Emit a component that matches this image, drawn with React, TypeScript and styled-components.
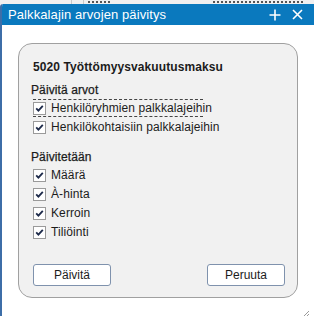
import * as React from "react";
import styled, { createGlobalStyle } from "styled-components";

const GlobalStyle = createGlobalStyle`
  html, body {
    margin: 0;
    padding: 0;
    background: #ffffff;
  }
  body {
    font-family: "Liberation Sans", Arial, sans-serif;
    width: 314px;
    height: 316px;
    overflow: hidden;
  }
`;

const Screen = styled.div`
  width: 314px;
  height: 316px;
  display: flex;
  flex-direction: column;
  overflow: hidden;
  background: #f4f4f4;
`;

// bottoms of the grid cells that lie behind the dialog
const BackStrip = styled.div`
  height: 4px;
  display: flex;
  overflow: hidden;
  background: #f0f0f0;
`;

const BackCell = styled.div<{ $w: number; $line?: boolean; $ink?: number }>`
  width: ${(p) => p.$w}px;
  flex: none;
  box-sizing: border-box;
  border-right: ${(p) => (p.$line ? "1px solid #c8c8c8" : "none")};
  background: ${(p) =>
    p.$ink
      ? `linear-gradient(#f0f0f0 0 1px, transparent 1px 3px, #f0f0f0 3px) ,
         repeating-linear-gradient(90deg, #555 0 2px, transparent 2px 4px) 4px 0 / ${p.$ink}px 100% no-repeat`
      : "transparent"};
`;

const Dialog = styled.div`
  flex: 1;
  display: flex;
  flex-direction: column;
  background: #ffffff;
  border-left: 2px solid #3d6ea8;
  border-top-left-radius: 3px;
  overflow: hidden;
`;

const TitleBar = styled.div`
  height: 21px;
  flex: none;
  display: flex;
  align-items: center;
  background: #0a79be;
  color: #ffffff;
  padding: 0 6px 0 6px;
`;

const Title = styled.div`
  flex: 1;
  font-family: "Liberation Sans", Arial, sans-serif;
  font-size: 13px;
  letter-spacing: 0.1px;
`;

const TitleButton = styled.div`
  width: 22px;
  height: 21px;
  display: flex;
  align-items: center;
  justify-content: center;
`;

const Body = styled.div`
  flex: 1;
  position: relative;
  padding: 18px 0 0 16px;
`;

const Panel = styled.div`
  width: 280px;
  height: 255px;
  box-sizing: border-box;
  border: 1px solid #a0a0a0;
  border-radius: 14px;
  background: #f1f1f1;
  padding: 16px 12px 0 14px;
  display: flex;
  flex-direction: column;
  color: #1c1c1c;
  font-size: 12px;
  letter-spacing: 0.1px;
`;

const Heading = styled.div<{ $top: number; $shift?: boolean }>`
  height: 15px;
  line-height: 15px;
  margin-top: ${(p) => p.$top}px;
  margin-left: ${(p) => (p.$shift ? -2 : 0)}px;
  font-weight: ${(p) => (p.$shift ? 400 : 700)};
  -webkit-text-stroke: ${(p) => (p.$shift ? "0.25px #1c1c1c" : "0")};
`;

const Row = styled.label<{ $focus?: boolean }>`
  height: 18px;
  display: flex;
  align-items: center;
  gap: 5px;
  margin-top: 1px;
  width: ${(p) => (p.$focus ? "170px" : "auto")};
  box-sizing: border-box;
  border-top: 1px dashed ${(p) => (p.$focus ? "#444" : "transparent")};
  border-bottom: 1px dashed ${(p) => (p.$focus ? "#444" : "transparent")};
  white-space: nowrap;
`;

const Box = styled.span`
  width: 13px;
  height: 13px;
  flex: none;
  box-sizing: border-box;
  border: 1px solid #9a9a9a;
  background: #ffffff;
  display: flex;
  align-items: center;
  justify-content: center;
`;

const Buttons = styled.div`
  margin-top: auto;
  margin-bottom: 11px;
  display: flex;
  justify-content: space-between;
`;

const Button = styled.button`
  width: 78px;
  height: 22px;
  box-sizing: border-box;
  border: 1px solid #7f92ad;
  border-radius: 3px;
  background: #ffffff;
  font-family: "Liberation Sans", Arial, sans-serif;
  font-size: 12px;
  color: #1c1c1c;
  padding: 0;
`;

const Grip = styled.div`
  position: absolute;
  right: 4px;
  bottom: 4px;
  width: 8px;
  height: 8px;
`;

const Check = () => (
  <svg width="9" height="9" viewBox="0 0 9 9">
    <path d="M1.2 4.4 L3.4 6.6 L7.8 1.8" fill="none" stroke="#1d2a4a" strokeWidth="1.8" />
  </svg>
);

const CheckRow: React.FunctionComponent<{ text: string; focus?: boolean }> = ({ text, focus }) => (
  <Row $focus={focus}>
    <Box>
      <Check />
    </Box>
    {text}
  </Row>
);

export default function App() {
  return (
    <Screen>
      <GlobalStyle />
      <BackStrip>
        <BackCell $w={72} $line />
        <BackCell $w={12} $line />
        <BackCell $w={125} $ink={24} />
        <BackCell $w={105} $ink={90} />
      </BackStrip>
      <Dialog>
        <TitleBar>
          <Title>Palkkalajin arvojen päivitys</Title>
          <TitleButton>
            <svg width="12" height="12" viewBox="0 0 12 12">
              <path d="M6 0.5 V11.5 M0.5 6 H11.5" stroke="#fff" strokeWidth="1.6" />
            </svg>
          </TitleButton>
          <TitleButton>
            <svg width="11" height="11" viewBox="0 0 11 11">
              <path d="M1 1 L10 10 M10 1 L1 10" stroke="#fff" strokeWidth="1.6" />
            </svg>
          </TitleButton>
        </TitleBar>
        <Body>
          <Panel>
            <Heading $top={0}>5020 Työttömyysvakuutusmaksu</Heading>
            <Heading $top={8} $shift>
              Päivitä arvot
            </Heading>
            <CheckRow text="Henkilöryhmien palkkalajeihin" focus />
            <CheckRow text="Henkilökohtaisiin palkkalajeihin" />
            <Heading $top={14} $shift>
              Päivitetään
            </Heading>
            <CheckRow text="Määrä" />
            <CheckRow text="À-hinta" />
            <CheckRow text="Kerroin" />
            <CheckRow text="Tiliöinti" />
            <Buttons>
              <Button>Päivitä</Button>
              <Button>Peruuta</Button>
            </Buttons>
          </Panel>
          <Grip>
            <svg width="8" height="8" viewBox="0 0 8 8">
              <path d="M7 1 L1 7 M7 4 L4 7" stroke="#9a9a9a" strokeWidth="1" />
            </svg>
          </Grip>
        </Body>
      </Dialog>
    </Screen>
  );
}
